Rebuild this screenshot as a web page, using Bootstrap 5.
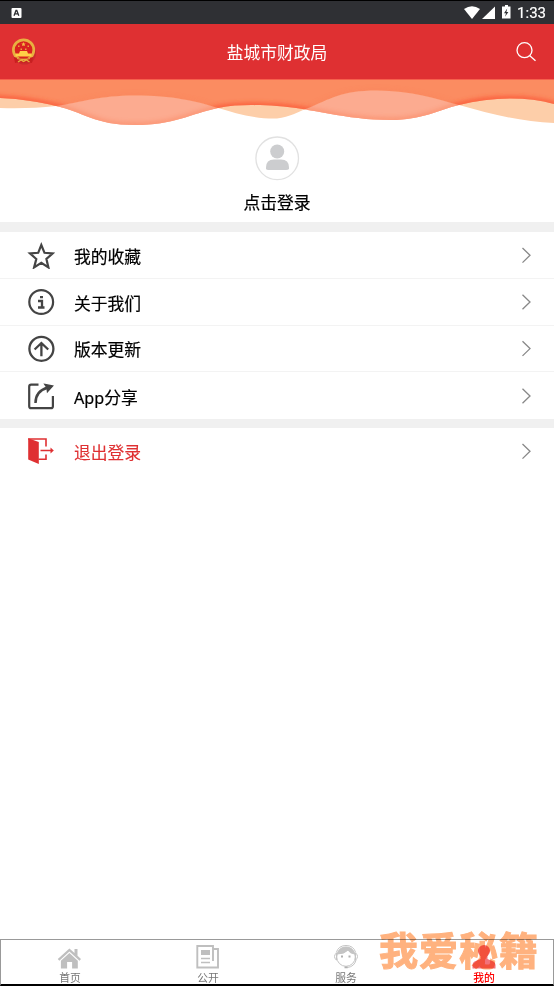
<!DOCTYPE html>
<html lang="zh-CN">
<head>
  <meta charset="UTF-8" />
  <meta name="viewport" content="width=device-width, initial-scale=1.0"/>
  <title>盐城市财政局</title>
  <link href="https://cdn.jsdelivr.net/npm/bootstrap@5.3.0/dist/css/bootstrap.min.css" rel="stylesheet"/>
  <style>
    body {
      font-family: Roboto, "Noto Sans CJK SC", sans-serif;
      height: 986px;
      overflow: hidden;
      background-color: #fff;
      color: #000;
    }

    svg {
      display: block;
      flex-shrink: 0;
    }

    .status-bar {
      height: 24px;
      padding: 1px 8px 0 11px;
      background-color: #2f3034;
      border-top: 1px solid #000;
      color: #fff;
    }

    .clock {
      font-size: 15px;
      line-height: 22px;
      -webkit-text-stroke: 0.2px;
    }

    .app-header {
      height: 55px;
      padding: 0 17px 0 9px;
      background-color: #df3032;
      color: #fff;
    }

    .app-title {
      font-size: 16.8px;
      line-height: 24px;
      padding-top: 3px;
    }

    .profile {
      height: 94px;
      padding-top: 8px;
    }

    .profile-name {
      font-size: 16.8px;
      line-height: 24px;
      margin-top: 10px;
      -webkit-text-stroke: 0.2px;
    }

    .band {
      height: 10px;
      background-color: #f0f0f0;
    }

    .band-thin {
      height: 9px;
    }

    .menu-row {
      height: 46.75px;
      padding: 0 22px 0 27px;
      font-family: "Noto Sans", "Noto Sans CJK SC", sans-serif;
      font-size: 16.8px;
      line-height: 24px;
      border-bottom: 1px solid #f3f3f3;
      color: #000;
      text-decoration: none;
      -webkit-text-stroke: 0.2px;
    }

    .menu-row:last-child {
      border-bottom: 0;
    }

    .menu-label {
      margin-left: 19px;
      padding-top: 4px;
    }

    .latin {
      font-size: 16.2px;
    }

    .logout {
      color: #df3032;
      -webkit-text-stroke: 0.1px;
    }

    .tab-bar {
      height: 47px;
      border: 1px solid #999;
      border-bottom: 2px solid #000;
    }

    .tab-item {
      padding-top: 4px;
      font-size: 10.8px;
      line-height: 12px;
      color: #777;
      text-decoration: none;
    }

    .tab-item.current {
      color: #f00;
      font-weight: 500;
    }

    .tab-label {
      margin-top: 3px;
    }

    .watermark {
      left: 379px;
      top: 930px;
      font-family: "Noto Sans CJK SC", sans-serif;
      font-size: 39px;
      line-height: 36px;
      letter-spacing: 1px;
      font-weight: 700;
      -webkit-text-stroke: 1px #ffb27f;
      stroke-linejoin: round;
      white-space: nowrap;
      color: #ffb27f;
      mix-blend-mode: multiply;
      pointer-events: none;
    }
  </style>
</head>
<body class="d-flex flex-column position-relative">

  <!-- Status bar -->
  <div class="status-bar d-flex align-items-center justify-content-between">
    <svg width="11" height="11" viewBox="0 0 11 11">
      <rect x=".5" y="0" width="10" height="10" rx="1" fill="#fff"/>
      <path d="M3 7.8 5 2.500h.8l2 5.300M3.800 5.900h3.100" fill="none" stroke="#2f3034" stroke-width="1.3"/>
    </svg>
    <div class="d-flex align-items-center">
      <svg width="53" height="16" viewBox="0 0 53 16" fill="#fff">
        <path d="M0 4Q8-1.5 16 4L8 14z"/>
        <path d="M31 1.5V14H18z"/>
        <path d="M41 0h3v1.400h2.500V13.500H38V1.400h3z"/>
        <path d="M43.200 3.500 40 8.200h2L41 11.700l3.400-4.700h-2z" fill="#2f3034"/>
      </svg>
      <span class="clock">1:33</span>
    </div>
  </div>

  <!-- Header -->
  <header class="app-header d-flex align-items-center justify-content-between">
    <svg width="30" height="30" viewBox="0 0 30 30">
      <ellipse cx="15.500" cy="16" rx="11.500" ry="11.500" fill="#a92226" opacity=".4"/>
      <circle cx="14.600" cy="13" r="10.200" fill="#d9221f" stroke="#e8b040" stroke-width="2.700"/>
      <path d="m14.500 5 .7 1.400 1.500.2-1.100 1 .3 1.500-1.400-.7-1.400.7.3-1.500-1.100-1 1.500-.2z" fill="#f5bd43"/>
      <path d="M9 8.500h1.500V10H9zm9.500 0H20V10h-1.500zM11.500 11.500h1.500V13h-1.500zm4.500 0h1.500V13H16z" fill="#e8a43a"/>
      <path d="M11 14h7l1 2.500h3.500v3h-16v-3H10z" fill="#ffd047"/>
      <path d="M5 20q9.500 3 19 0l-1 6-4.500-1-4 1-4-1-4.500 1z" fill="#c91f20"/>
      <path d="M8 21.500q6.500 2 13 0M9 25l3-2 2.500 1.500 3-1.500 3 2" fill="none" stroke="#e8b040" stroke-width="1.300"/>
    </svg>
    <span class="app-title">盐城市财政局</span>
    <svg width="22" height="22" viewBox="0 0 22 22" fill="none" stroke="#fff" stroke-width="1.3">
      <circle cx="9.500" cy="9.200" r="7.500"/>
      <path d="m14.800 14.800 5.700 5"/>
    </svg>
  </header>

  <!-- Waves: two crossing curves, the overlap is the deeper orange -->
  <svg width="554" height="49" viewBox="0 79 554 49">
    <defs>
      <path id="waveA" d="M-20 50V97L0 98C22 99 40 102 56 106C84 112 94 125 135 125C174 125 190 114 218 108C238 104 259 105 277 106C311 108 345 120 391 120C422 120 438 110 459 105C490 97 526 96 554 104L574 109V50z"/>
      <path id="waveB" d="M-20 50V108H0C22 108.500 38 108 56 106C83 102 99 95.500 135 95.500C172 95.500 196 101 218 108C235 113 253 119 277 118.500C290 117 298 112 307 108.500C331 99 340 90.500 377 90.500C411 90.500 437 99 459 105C491 114 522 122 554 123H574V50z"/>
      <clipPath id="clipA"><use href="#waveA"/></clipPath>
      <clipPath id="clipB"><use href="#waveB"/></clipPath>
      <filter id="soft" x="-5%" y="-20%" width="110%" height="140%"><feGaussianBlur stdDeviation="2.500"/></filter>
    </defs>
    <use href="#waveA" fill="#fcab90"/>
    <use href="#waveB" fill="#fdcea9"/>
    <!-- pink part: below curve B, inside curve A -->
    <g clip-path="url(#clipA)">
      <path d="M56 106C83 102 99 95.500 135 95.500C172 95.500 196 101 218 108V128H56zM307 108.500C331 99 340 90.500 377 90.500C411 90.500 437 99 459 105V128H307z" fill="#fcab90"/>
      <use href="#waveA" fill="none" stroke="#fb7850" stroke-width="3" filter="url(#soft)" opacity=".7"/>
    </g>
    <g clip-path="url(#clipA)">
      <g clip-path="url(#clipB)">
        <rect y="79" width="554" height="49" fill="#fb8c61"/>
        <use href="#waveA" fill="none" stroke="#fc4a2c" stroke-width="3.500" filter="url(#soft)"/>
        <use href="#waveB" fill="none" stroke="#fb7954" stroke-width="2" filter="url(#soft)" opacity=".4"/>
        <rect y="79" width="554" height="1" fill="#f6604c"/>
      </g>
    </g>
  </svg>

  <!-- Profile -->
  <section class="profile d-flex flex-column align-items-center">
    <svg width="45" height="45" viewBox="0 0 45 45">
      <circle cx="22.200" cy="22.300" r="21.300" fill="#fff" stroke="#e1e1e1" stroke-width="1.300"/>
      <circle cx="22.200" cy="15.500" r="7" fill="#cccdcf"/>
      <path d="M11 33v-1.500q0-8 8-8h7q8 0 8 8V33q-1 1-3 1H13.500q-2 0-2.500-1z" fill="#cccdcf"/>
    </svg>
    <div class="profile-name">点击登录</div>
  </section>

  <div class="band"></div>

  <!-- Menu -->
  <nav>
    <a class="menu-row d-flex align-items-center" href="#">
      <svg width="28" height="28" viewBox="0 0 28 28" fill="none" stroke="#444" stroke-width="2.200">
        <path d="m14.300 4 3.200 7.800 8.200.6-6.300 5.600 2 8.400-7.100-4.500-7.200 4.500 2.200-8.400L3 12.400l8.200-.6z"/>
      </svg>
      <span class="menu-label">我的收藏</span>
      <svg class="ms-auto" width="11" height="18" viewBox="0 0 11 18" fill="none" stroke="#888" stroke-width="1.300"><path d="m1.500 2 7.500 7.300-7.500 7.300"/></svg>
    </a>
    <a class="menu-row d-flex align-items-center" href="#">
      <svg width="28" height="28" viewBox="0 0 28 28" fill="none" stroke="#444" stroke-width="2.200">
        <circle cx="14.200" cy="14" r="11.900"/>
        <path d="M13 9.200h3M11 13h4v6.500M11 19.500h6.500" stroke-width="2.300"/>
      </svg>
      <span class="menu-label">关于我们</span>
      <svg class="ms-auto" width="11" height="18" viewBox="0 0 11 18" fill="none" stroke="#888" stroke-width="1.300"><path d="m1.500 1.700 7.500 7.300-7.500 7.300"/></svg>
    </a>
    <a class="menu-row d-flex align-items-center" href="#">
      <svg width="28" height="28" viewBox="0 0 28 28" fill="none" stroke="#444" stroke-width="2.300">
        <circle cx="14.400" cy="14.800" r="12"/>
        <path d="M14.400 22.300V9M7.600 15.500l6.800-6.500 6.800 6.500"/>
      </svg>
      <span class="menu-label">版本更新</span>
      <svg class="ms-auto" width="11" height="18" viewBox="0 0 11 18" fill="none" stroke="#888" stroke-width="1.300"><path d="m1.500 2.300 7.500 7.300-7.500 7.300"/></svg>
    </a>
    <a class="menu-row d-flex align-items-center" href="#">
      <svg width="28" height="28" viewBox="0 0 28 28" fill="none" stroke="#444" stroke-width="2.200">
        <path d="M11.500 2.700H4.200q-2 0-2 2v19.500q0 2 2 2h19.700q2 0 2-2V14"/>
        <path d="M8.500 21Q8.500 9 21 5.500" stroke-width="2.500"/>
        <path d="m18 2.500 7.500 1.500-5 5.500-.5-4z" fill="#444" stroke-width="1.500"/>
      </svg>
      <span class="menu-label"><span class="latin">App</span>分享</span>
      <svg class="ms-auto" width="11" height="18" viewBox="0 0 11 18" fill="none" stroke="#888" stroke-width="1.300"><path d="m1.500 1.700 7.500 7.300-7.500 7.300"/></svg>
    </a>
  </nav>

  <div class="band band-thin"></div>

  <nav>
    <a class="menu-row logout d-flex align-items-center" href="#">
      <svg width="28" height="28" viewBox="0 0 28 28" fill="none" stroke="#df3032" stroke-width="1.600">
        <path d="M1.200 1.200 11.800 5v22L1.200 22.500z" fill="#df3032" stroke="none"/>
        <path d="M1.200 2h17.800v7.500M19 17.500V22.300h-7.500M13.500 13.500h10.500"/>
        <path d="m23.500 10.500 3.300 3-3.300 3z" fill="#df3032" stroke="none"/>
      </svg>
      <span class="menu-label">退出登录</span>
      <svg class="ms-auto" width="11" height="18" viewBox="0 0 11 18" fill="none" stroke="#888" stroke-width="1.300"><path d="m1.500 2 7.500 7.300-7.500 7.300"/></svg>
    </a>
  </nav>

  <!-- Bottom tabs -->
  <footer class="tab-bar row g-0 mt-auto">
    <a class="tab-item col d-flex flex-column align-items-center" href="#">
      <svg width="26" height="26" viewBox="0 0 26 26" fill="#bfbfbf">
        <path d="m.8 15 11.600-10.500L17.500 9V5h3v6.800L24 15l-1.500 1.700-10.100-9.100L2.300 16.700z"/>
        <path d="m3.900 16.700 8.500-7.800 8.400 7.800v7.800h-5.700V18h-5v6.500H3.900z"/>
      </svg>
      <span class="tab-label">首页</span>
    </a>
    <a class="tab-item col d-flex flex-column align-items-center" href="#">
      <svg width="26" height="26" viewBox="0 0 26 26" fill="none" stroke="#bfbfbf" stroke-width="1.900">
        <path d="M18 17V2H2.300v21.500h20.700V5h-5"/>
        <path d="M6 6h9v5H6z" fill="#bfbfbf" stroke="none"/>
        <path d="M6 14.500h9M6 18.500h9" stroke-width="1.300"/>
      </svg>
      <span class="tab-label">公开</span>
    </a>
    <a class="tab-item col d-flex flex-column align-items-center" href="#">
      <svg width="26" height="26" viewBox="0 0 26 26" fill="none" stroke="#c4c4c4" stroke-width="1">
        <circle cx="13" cy="13" r="9.300"/>
        <path d="M4.300 10Q6 3 13 3t8.700 7q-5-.5-6.700-4-3.500 4-10.700 4z" fill="#c4c4c4"/>
        <path d="M3.300 8.500Q5.500 1.500 13 1.500t9.700 7M3.500 9Q1.500 10 1.500 12.500t2 3.500zM22.500 9q2 1 2 3.500t-2 3.500zM23 16q-1.500 6.500-8.500 7.500"/>
        <path d="M8 11.500h2v2H8zM15.500 11.500h2v2h-2zM11.500 22.500h3.200v1.800h-3.200z" fill="#b0b0b0" stroke="none"/>
      </svg>
      <span class="tab-label">服务</span>
    </a>
    <a class="tab-item current col d-flex flex-column align-items-center" href="#">
      <svg width="26" height="26" viewBox="0 0 26 26" fill="#f2727a">
        <ellipse cx="13" cy="7" rx="6" ry="6"/>
        <path d="M9.500 11h7v4l6 2.500q2 1 2 3.500v3.500h-23V21q0-2.500 2-3.500l6-2.500z"/>
      </svg>
      <span class="tab-label">我的</span>
    </a>
  </footer>

  <div class="watermark position-absolute">我爱秘籍</div>

  <script src="https://cdn.jsdelivr.net/npm/bootstrap@5.3.0/dist/js/bootstrap.bundle.min.js"></script>
</body>
</html>
